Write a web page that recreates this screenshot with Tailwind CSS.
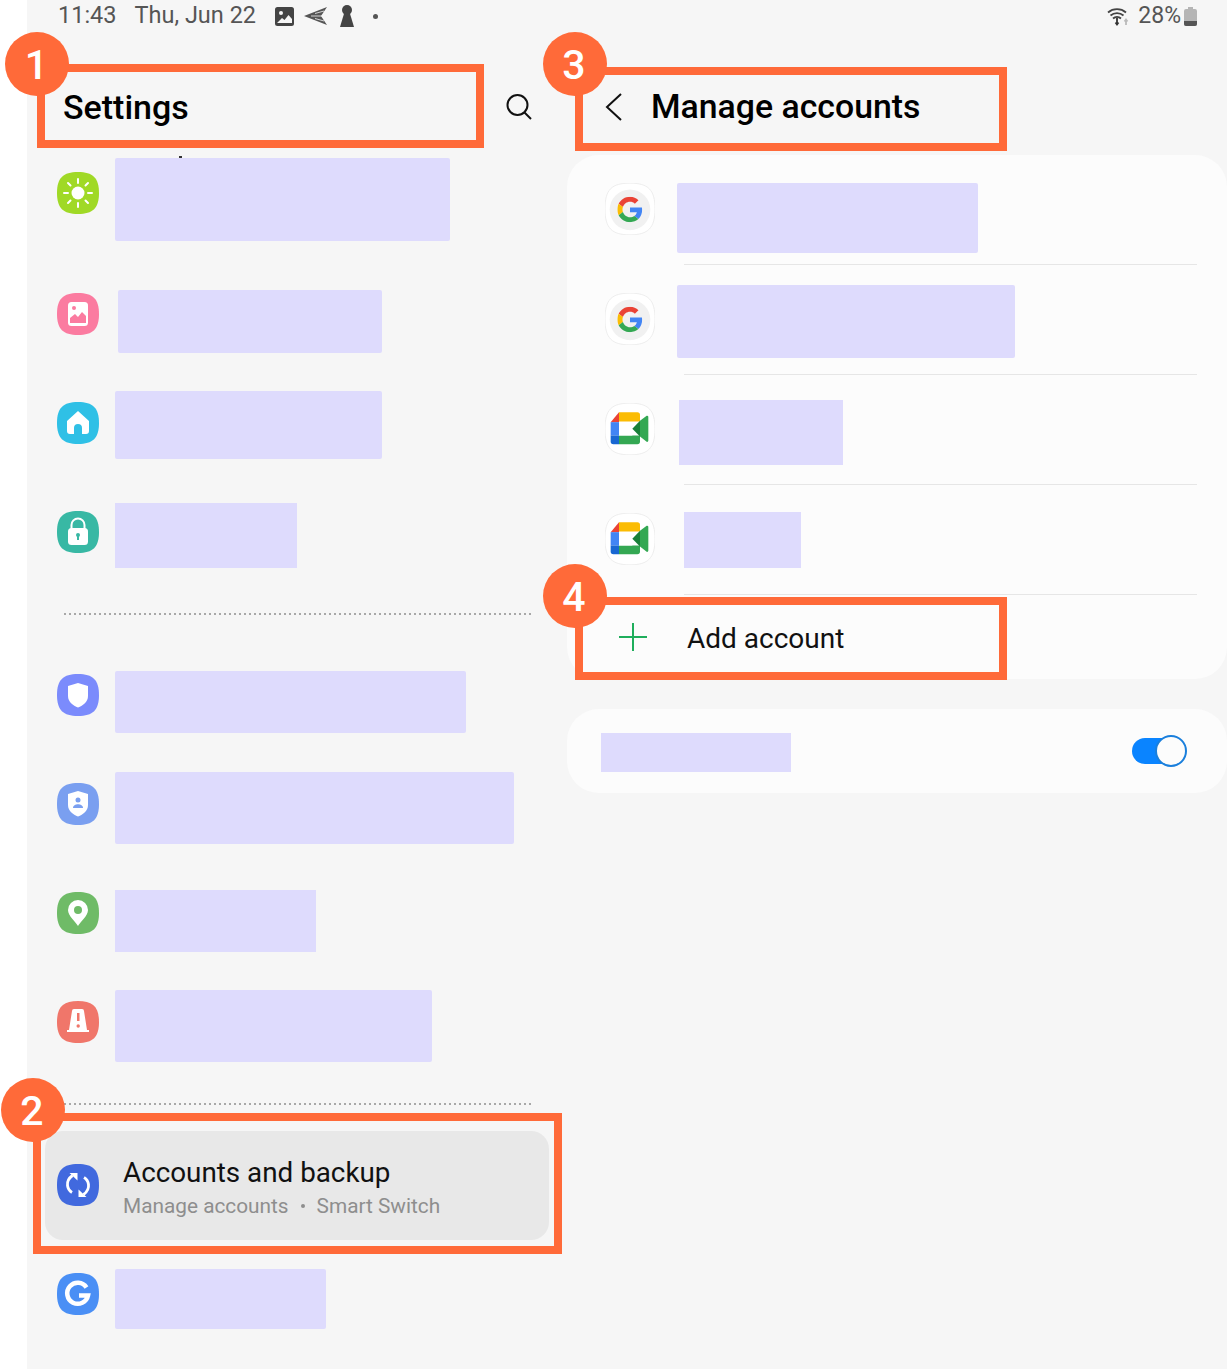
<!DOCTYPE html>
<html lang="en">
<head>
  <meta charset="UTF-8">
  <title>Manage accounts</title>
  <script src="https://cdn.jsdelivr.net/npm/@tailwindcss/browser@4"></script>
</head>
<body class="bg-white font-['Roboto',sans-serif]">
  <div class="relative w-[1227px] h-[1369px] overflow-hidden pl-[27px]">
    <div class="bg-[#f6f6f6] h-full">

      <!-- status bar -->
      <div class="flex items-center h-[32px] pl-[31px] pr-[30px] text-[23px] text-[#555]">
        <span class="text-[23.500px]">11:43</span>
        <span class="ml-[18px] text-[23.500px]">Thu, Jun 22</span>
        <svg class="ml-[19px]" width="19" height="19" viewBox="0 0 19 19"><rect width="19" height="19" rx="2.500" fill="#444"/><circle cx="6" cy="6" r="2" fill="#f6f6f6"/><path d="M2 16l5-5 2.500 2 4-5 3.500 4v4z" fill="#f6f6f6"/></svg>
        <svg class="ml-[10px]" width="23" height="18" viewBox="0 0 23 18"><path d="M0 9L23 0 17 9l6 9z" fill="#555"/><path d="M7 9h16M11 6.500l9-2.500M11 11.500l9 2.500" stroke="#f6f6f6" stroke-width="0.800"/></svg>
        <svg class="ml-[13px]" width="14" height="22" viewBox="0 0 14 22"><circle cx="7" cy="5" r="5" fill="#444"/><path d="M4.500 7h5L14 22H0z" fill="#444"/></svg>
        <span class="ml-[19px] w-[5px] h-[5px] rounded-full bg-[#555]"></span>
        <svg class="ml-auto" width="23" height="20" viewBox="0 0 23 20" fill="none" stroke="#444" stroke-width="1.800"><path d="M1 6.500a14 14 0 0 1 18 0M3.500 9.500a10 10 0 0 1 13 0M6 12.500a6 6 0 0 1 8 0"/><path d="M10 12v6M8.500 16.500l1.500 2 1.500-2" stroke="#333"/><path d="M19 19v-5M17.500 15.500l1.500-2 1.500 2" stroke="#bbb"/></svg>
        <span class="ml-[8px]">28%</span>
        <svg class="ml-[3px]" width="13" height="19" viewBox="0 0 13 19"><path d="M4 0h5v2h2a2 2 0 0 1 2 2v13a2 2 0 0 1-2 2H2a2 2 0 0 1-2-2V4a2 2 0 0 1 2-2h2z" fill="#b5b5b5"/><path d="M0 14h13v3a2 2 0 0 1-2 2H2a2 2 0 0 1-2-2z" fill="#555"/></svg>
      </div>

      <div class="flex">
        <!-- left column -->
        <div class="w-[540px] shrink-0">
          <div class="flex items-center justify-between h-[108px] pl-[36px] pr-[34px] pt-[42px]">
            <h1 class="text-[34px] font-medium text-black">Settings</h1>
            <svg width="28" height="28" viewBox="0 0 28 28" fill="none" stroke="#111" stroke-width="2"><circle cx="12.500" cy="12" r="10"/><path d="M19.500 19.500l6.500 6.500"/></svg>
          </div>

          <div class="flex items-start h-[120px] pl-[30px]">
            <svg class="mt-[32px] shrink-0" width="42" height="42" viewBox="0 0 42 42"><path d="M21 0C36 0 42 6 42 21S36 42 21 42 0 36 0 21 6 0 21 0Z" fill="#a0d926"/><circle cx="21" cy="21" r="6.500" fill="#fff"/><path d="M21 7v4M21 31v4M7 21h4M31 21h4M11 11l2.500 2.500M28.500 28.500L31 31M31 11l-2.500 2.500M13.500 28.500L11 31" stroke="#fff" stroke-width="2" stroke-linecap="round"/></svg>
            <div class="mt-[18px] ml-[16px] w-[335px] h-[83px] rounded-[2px] bg-[#dedbfd]"></div>
          </div>
          <div class="flex items-start h-[110px] pl-[30px]">
            <svg class="mt-[33px] shrink-0" width="42" height="42" viewBox="0 0 42 42"><path d="M21 0C36 0 42 6 42 21S36 42 21 42 0 36 0 21 6 0 21 0Z" fill="#fb7ba0"/><rect x="11" y="9" width="20" height="24" rx="3.500" fill="#fff"/><circle cx="17" cy="15" r="2" fill="#fb7ba0"/><path d="M13 30v-5l5-4 3 3 4-5 4 4v7z" fill="#fb7ba0"/></svg>
            <div class="mt-[30px] ml-[19px] w-[264px] h-[63px] rounded-[2px] bg-[#dedbfd]"></div>
          </div>
          <div class="flex items-start h-[109px] pl-[30px]">
            <svg class="mt-[32px] shrink-0" width="42" height="42" viewBox="0 0 42 42"><path d="M21 0C36 0 42 6 42 21S36 42 21 42 0 36 0 21 6 0 21 0Z" fill="#2fc0e6"/><path d="M21 9L10 19v10a3 3 0 0 0 3 3h4v-6a4 4 0 0 1 8 0v6h4a3 3 0 0 0 3-3V19z" fill="#fff"/></svg>
            <div class="mt-[21px] ml-[16px] w-[267px] h-[68px] rounded-[2px] bg-[#dedbfd]"></div>
          </div>
          <div class="flex items-start h-[109px] pl-[30px]">
            <svg class="mt-[32px] shrink-0" width="42" height="42" viewBox="0 0 42 42"><path d="M21 0C36 0 42 6 42 21S36 42 21 42 0 36 0 21 6 0 21 0Z" fill="#38b8a4"/><path d="M14.500 18v-4a6.500 6.500 0 0 1 13 0v4" fill="none" stroke="#fff" stroke-width="2"/><rect x="11" y="17" width="20" height="17" rx="3.500" fill="#fff"/><circle cx="21" cy="24" r="2" fill="#38b8a4"/><rect x="20" y="24" width="2" height="5" fill="#38b8a4"/></svg>
            <div class="mt-[24px] ml-[16px] w-[182px] h-[65px] bg-[#dedbfd]"></div>
          </div>

          <div class="h-[53px] flex items-center pl-[37px] pb-[2px]">
            <svg width="468" height="2"><line x1="0" y1="1" x2="468" y2="1" stroke="#a8a8a8" stroke-width="2" stroke-dasharray="2 3"/></svg>
          </div>

          <div class="flex items-start h-[109px] pl-[30px]">
            <svg class="mt-[33px] shrink-0" width="42" height="42" viewBox="0 0 42 42"><path d="M21 0C36 0 42 6 42 21S36 42 21 42 0 36 0 21 6 0 21 0Z" fill="#7b8bfc"/><path d="M21 9l10 3v10c0 6-5 9.500-10 11.500C16 31.500 11 28 11 22V12z" fill="#fff"/></svg>
            <div class="mt-[30px] ml-[16px] w-[351px] h-[62px] rounded-[2px] bg-[#dedbfd]"></div>
          </div>
          <div class="flex items-start h-[109px] pl-[30px]">
            <svg class="mt-[33px] shrink-0" width="42" height="42" viewBox="0 0 42 42"><path d="M21 0C36 0 42 6 42 21S36 42 21 42 0 36 0 21 6 0 21 0Z" fill="#7a9ff0"/><path d="M21 8l10 3v11c0 6-5 9.500-10 11.500C16 31.500 11 28 11 22V11z" fill="#fff"/><circle cx="21" cy="17" r="2.500" fill="#7a9ff0"/><path d="M16 25c0-5 10-5 10 0z" fill="#7a9ff0"/></svg>
            <div class="mt-[22px] ml-[16px] w-[399px] h-[72px] rounded-[2px] bg-[#dedbfd]"></div>
          </div>
          <div class="flex items-start h-[109px] pl-[30px]">
            <svg class="mt-[33px] shrink-0" width="42" height="42" viewBox="0 0 42 42"><path d="M21 0C36 0 42 6 42 21S36 42 21 42 0 36 0 21 6 0 21 0Z" fill="#6fbb67"/><path d="M21 34c-2-4-10-10-10-16a10 10 0 0 1 20 0c0 6-8 12-10 16z" fill="#fff"/><circle cx="21" cy="18" r="4" fill="#6fbb67"/></svg>
            <div class="mt-[31px] ml-[16px] w-[201px] h-[62px] bg-[#dedbfd]"></div>
          </div>
          <div class="flex items-start h-[109px] pl-[30px]">
            <svg class="mt-[33px] shrink-0" width="42" height="42" viewBox="0 0 42 42"><path d="M21 0C36 0 42 6 42 21S36 42 21 42 0 36 0 21 6 0 21 0Z" fill="#f0766a"/><path d="M15 10a2 2 0 0 1 2-2h8a2 2 0 0 1 2 2l3 19h2v2H10v-2h2z" fill="#fff"/><rect x="20" y="12" width="2.500" height="8" fill="#f0766a"/><circle cx="21.200" cy="25" r="1.700" fill="#f0766a"/></svg>
            <div class="mt-[22px] ml-[16px] w-[317px] h-[72px] rounded-[2px] bg-[#dedbfd]"></div>
          </div>

          <div class="h-[54px] flex items-center pl-[37px]">
            <svg width="468" height="2"><line x1="0" y1="1" x2="468" y2="1" stroke="#a8a8a8" stroke-width="2" stroke-dasharray="2 3"/></svg>
          </div>

          <!-- selected row -->
          <div class="flex items-center h-[109px] w-[504px] ml-[18px] pl-[12px] rounded-[18px] bg-[#e8e8e8]">
            <svg class="shrink-0 -mt-[1px]" width="42" height="42" viewBox="0 0 42 42" fill="none"><path d="M21 0C36 0 42 6 42 21S36 42 21 42 0 36 0 21 6 0 21 0Z" fill="#4169de"/><path d="M15.500 11.500C12 14 10 17.500 10.500 21.500c.4 3 2 5.500 4.500 7" stroke="#fff" stroke-width="2.800"/><path d="M26.500 30.500c3.500-2.500 5.500-6 5-10-.4-3-2-5.500-4.500-7" stroke="#fff" stroke-width="2.800"/><path d="M12.500 9h8v7.500zM29.500 33h-8v-7.500z" fill="#fff"/></svg>
            <div class="ml-[24px] pt-[4px]">
              <div class="text-[27.800px] leading-[36px] text-[#111]">Accounts and backup</div>
              <div class="mt-[1px] flex items-center text-[20.800px] leading-[28px] text-[#8e8e8e]"><span>Manage accounts</span><span class="mx-[12px] w-[4px] h-[4px] rounded-full bg-[#8e8e8e]"></span><span>Smart Switch</span></div>
            </div>
          </div>

          <div class="flex items-start h-[109px] pl-[30px]">
            <svg class="mt-[33px] shrink-0" width="42" height="42" viewBox="0 0 42 42" fill="none"><path d="M21 0C36 0 42 6 42 21S36 42 21 42 0 36 0 21 6 0 21 0Z" fill="#4a8ff5"/><path d="M29.500 14.500a10.500 10.500 0 1 0 1.500 8H22" stroke="#fff" stroke-width="4.500"/></svg>
            <div class="mt-[29px] ml-[16px] w-[211px] h-[60px] rounded-[2px] bg-[#dedbfd]"></div>
          </div>
        </div>

        <!-- right column -->
        <div class="flex-1">
          <div class="flex items-center h-[123px] pl-[37px] pt-[27px]">
            <svg width="20" height="30" viewBox="0 0 20 30" fill="none" stroke="#111" stroke-width="2"><path d="M17 2L3 15l14 13"/></svg>
            <h2 class="ml-[27px] text-[33.800px] font-medium text-black">Manage accounts</h2>
          </div>

          <div class="rounded-[32px] bg-[#fcfcfc]">
            <div class="flex flex-col h-[110px]">
              <div class="flex items-start flex-1 pl-[38px]">
                <svg class="mt-[28px] shrink-0" width="50" height="52" viewBox="30 25 150 155"><path d="M105 25c55 0 75 20 75 77s-20 78-75 78-75-20-75-78 20-77 75-77z" fill="#fff" stroke="#e6e6e6" stroke-width="2"/><circle cx="105" cy="105" r="61" fill="#f1f1f1"/><svg x="67" y="66" width="76" height="76" viewBox="0 0 48 48"><path fill="#EA4335" d="M24 9.500c3.540 0 6.710 1.220 9.210 3.600l6.850-6.850C35.900 2.380 30.470 0 24 0 14.620 0 6.510 5.380 2.560 13.220l7.980 6.190C12.430 13.720 17.740 9.500 24 9.500z"/><path fill="#4285F4" d="M46.980 24.550c0-1.570-.15-3.090-.38-4.550H24v9.020h12.940c-.58 2.960-2.260 5.480-4.780 7.180l7.730 6c4.510-4.180 7.090-10.360 7.090-17.650z"/><path fill="#FBBC05" d="M10.530 28.590c-.48-1.450-.76-2.990-.76-4.590s.27-3.140.76-4.590l-7.980-6.190C.92 16.460 0 20.120 0 24c0 3.880.92 7.540 2.560 10.780l7.970-6.190z"/><path fill="#34A853" d="M24 48c6.480 0 11.930-2.130 15.890-5.810l-7.730-6c-2.150 1.450-4.920 2.300-8.160 2.300-6.260 0-11.570-4.220-13.470-9.910l-7.980 6.190C6.510 42.620 14.620 48 24 48z"/></svg></svg>
                <div class="mt-[28px] ml-[22px] w-[301px] h-[70px] rounded-[2px] bg-[#dedbfd]"></div>
              </div>
              <div class="ml-[117px] mr-[30px] h-px bg-[#e6e6e6]"></div>
            </div>
            <div class="flex flex-col h-[110px]">
              <div class="flex items-start flex-1 pl-[38px]">
                <svg class="mt-[28px] shrink-0" width="50" height="52" viewBox="30 25 150 155"><path d="M105 25c55 0 75 20 75 77s-20 78-75 78-75-20-75-78 20-77 75-77z" fill="#fff" stroke="#e6e6e6" stroke-width="2"/><circle cx="105" cy="105" r="61" fill="#f1f1f1"/><svg x="67" y="66" width="76" height="76" viewBox="0 0 48 48"><path fill="#EA4335" d="M24 9.500c3.540 0 6.710 1.220 9.210 3.600l6.850-6.850C35.900 2.380 30.470 0 24 0 14.620 0 6.510 5.380 2.560 13.220l7.980 6.190C12.430 13.720 17.740 9.500 24 9.500z"/><path fill="#4285F4" d="M46.980 24.550c0-1.570-.15-3.090-.38-4.550H24v9.020h12.940c-.58 2.960-2.260 5.480-4.780 7.180l7.730 6c4.510-4.180 7.090-10.360 7.090-17.650z"/><path fill="#FBBC05" d="M10.530 28.590c-.48-1.450-.76-2.990-.76-4.590s.27-3.140.76-4.590l-7.980-6.190C.92 16.460 0 20.120 0 24c0 3.880.92 7.540 2.560 10.780l7.970-6.190z"/><path fill="#34A853" d="M24 48c6.480 0 11.930-2.130 15.890-5.810l-7.730-6c-2.150 1.450-4.920 2.300-8.160 2.300-6.260 0-11.570-4.220-13.470-9.910l-7.980 6.190C6.510 42.620 14.620 48 24 48z"/></svg></svg>
                <div class="mt-[20px] ml-[22px] w-[338px] h-[73px] rounded-[2px] bg-[#dedbfd]"></div>
              </div>
              <div class="ml-[117px] mr-[30px] h-px bg-[#e6e6e6]"></div>
            </div>
            <div class="flex flex-col h-[110px]">
              <div class="flex items-start flex-1 pl-[38px]">
                <svg class="mt-[28px] shrink-0" width="50" height="52" viewBox="30 25 150 155"><path d="M105 25c55 0 75 20 75 77s-20 78-75 78-75-20-75-78 20-77 75-77z" fill="#fff" stroke="#e6e6e6" stroke-width="2"/><path d="M72 52h55a8 8 0 0 1 8 8v20H72z" fill="#fbbc04"/><path d="M72 52v30H47z" fill="#ea4335"/><rect x="47" y="82" width="25" height="40" fill="#4285f4"/><path d="M47 122h25v26H55a8 8 0 0 1-8-8z" fill="#1967d2"/><path d="M72 122h63v18a8 8 0 0 1-8 8H72z" fill="#34a853"/><rect x="72" y="82" width="40" height="40" fill="#fff"/><path d="M112 102l23-24v47z" fill="#188038"/><path d="M135 78l20-15a4 4 0 0 1 5 3v72a4 4 0 0 1-5 3l-20-16z" fill="#34a853"/></svg>
                <div class="mt-[25px] ml-[24px] w-[164px] h-[65px] bg-[#dedbfd]"></div>
              </div>
              <div class="ml-[117px] mr-[30px] h-px bg-[#e6e6e6]"></div>
            </div>
            <div class="flex flex-col h-[110px]">
              <div class="flex items-start flex-1 pl-[38px]">
                <svg class="mt-[28px] shrink-0" width="50" height="52" viewBox="30 25 150 155"><path d="M105 25c55 0 75 20 75 77s-20 78-75 78-75-20-75-78 20-77 75-77z" fill="#fff" stroke="#e6e6e6" stroke-width="2"/><path d="M72 52h55a8 8 0 0 1 8 8v20H72z" fill="#fbbc04"/><path d="M72 52v30H47z" fill="#ea4335"/><rect x="47" y="82" width="25" height="40" fill="#4285f4"/><path d="M47 122h25v26H55a8 8 0 0 1-8-8z" fill="#1967d2"/><path d="M72 122h63v18a8 8 0 0 1-8 8H72z" fill="#34a853"/><rect x="72" y="82" width="40" height="40" fill="#fff"/><path d="M112 102l23-24v47z" fill="#188038"/><path d="M135 78l20-15a4 4 0 0 1 5 3v72a4 4 0 0 1-5 3l-20-16z" fill="#34a853"/></svg>
                <div class="mt-[27px] ml-[29px] w-[117px] h-[56px] bg-[#dedbfd]"></div>
              </div>
              <div class="ml-[117px] mr-[30px] h-px bg-[#e6e6e6]"></div>
            </div>
            <div class="flex items-center h-[84px] pl-[52px]">
              <svg class="shrink-0" width="28" height="28" viewBox="0 0 28 28" stroke="#1fae5c" stroke-width="2"><path d="M14 0v28M0 14h28"/></svg>
              <span class="ml-[40px] pt-[3px] text-[28px] text-[#111]">Add account</span>
            </div>
          </div>

          <div class="mt-[30px] flex items-center justify-between h-[84px] pl-[34px] pr-[40px] rounded-[32px] bg-[#fcfcfc]">
            <div class="mt-[2px] w-[190px] h-[39px] bg-[#dedbfd]"></div>
            <div class="relative w-[55px] h-[32px]">
              <div class="absolute left-0 top-[3px] w-[48px] h-[26px] rounded-full bg-[#0a84ff]"></div>
              <div class="absolute right-0 top-0 w-[32px] h-[32px] rounded-full bg-[#fcfcfc] border-2 border-[#1a7fdc]"></div>
            </div>
          </div>
        </div>
      </div>
    </div>

    <!-- bit of covered text showing above the first placeholder -->
    <div class="absolute left-[179px] top-[156px] w-[3px] h-[2px] bg-[#333]"></div>

    <!-- annotations -->
    <div class="absolute left-[37px] top-[64px] w-[447px] h-[84px] border-[8px] border-[#ff6a39]"></div>
    <div class="absolute left-[575px] top-[67px] w-[432px] h-[84px] border-[8px] border-[#ff6a39]"></div>
    <div class="absolute left-[33px] top-[1113px] w-[529px] h-[141px] border-[8px] border-[#ff6a39]"></div>
    <div class="absolute left-[575px] top-[597px] w-[432px] h-[83px] border-[8px] border-[#ff6a39]"></div>
    <div class="absolute left-[5px] top-[32px] w-[64px] h-[64px] pr-[1px] pt-[3px] rounded-full bg-[#ff6a39] flex items-center justify-center text-white text-[41px] font-medium">1</div>
    <div class="absolute left-[1px] top-[1078px] w-[64px] h-[64px] pr-[2px] pt-[3px] rounded-full bg-[#ff6a39] flex items-center justify-center text-white text-[41px] font-medium">2</div>
    <div class="absolute left-[543px] top-[32px] w-[64px] h-[64px] pr-[2px] pt-[3px] rounded-full bg-[#ff6a39] flex items-center justify-center text-white text-[41px] font-medium">3</div>
    <div class="absolute left-[543px] top-[564px] w-[64px] h-[64px] pr-[2px] pt-[3px] rounded-full bg-[#ff6a39] flex items-center justify-center text-white text-[41px] font-medium">4</div>
  </div>
</body>
</html>
